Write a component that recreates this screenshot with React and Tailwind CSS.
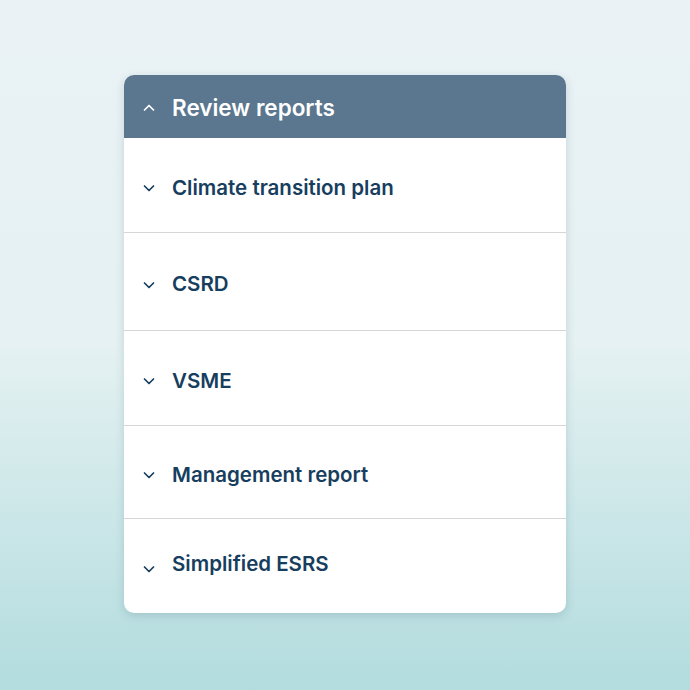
import React from 'react';

const items = [
  { label: 'Climate transition plan', h: 'h-[95px] pt-[6px]' },
  { label: 'CSRD', h: 'h-[98px] pt-[6px]' },
  { label: 'VSME', h: 'h-[95px] pt-[6px]' },
  { label: 'Management report', h: 'h-[93px] pt-[6px]' },
  { label: 'Simplified ESRS', h: 'h-[94px] pb-[3px]' },
];

const Chevron = ({ up, className = '' }) => (
  <svg width="14" height="14" viewBox="0 0 14 14" fill="none" className={`shrink-0 ${className}`}>
    <path
      d={up ? 'M2.5 9 L7 4.5 L11.5 9' : 'M2.5 5 L7 9.5 L11.5 5'}
      stroke="currentColor"
      strokeWidth="1.7"
      strokeLinecap="round"
      strokeLinejoin="round"
    />
  </svg>
);

const App = () => {
  return (
    <div className="w-[690px] h-[690px] bg-gradient-to-b from-[#eaf2f5] via-[#e5f1f2] to-[#b2dcde] flex justify-center pt-[75px] font-['Inter',sans-serif]">
      <div className="w-[442px] h-[538px] bg-white rounded-[10px] overflow-hidden shadow-[0_3px_10px_rgba(40,80,100,0.18)]">
        <div className="h-[63px] bg-[#5a778f] flex items-center gap-[16px] pl-[18px] pt-[2px] text-white">
          <Chevron up />
          <span className="text-[22.5px] font-semibold">Review reports</span>
        </div>
        {items.map((item, i) => (
          <div
            key={item.label}
            className={`${item.h} flex items-center gap-[16px] pl-[18px] text-[#173e5e] ${i < items.length - 1 ? 'border-b border-[#d6d6d6]' : ''}`}
          >
            <Chevron className={i === items.length - 1 ? 'mt-[8px]' : ''} />
            <span className="text-[20.5px] font-semibold">{item.label}</span>
          </div>
        ))}
      </div>
    </div>
  );
};

export default App;
